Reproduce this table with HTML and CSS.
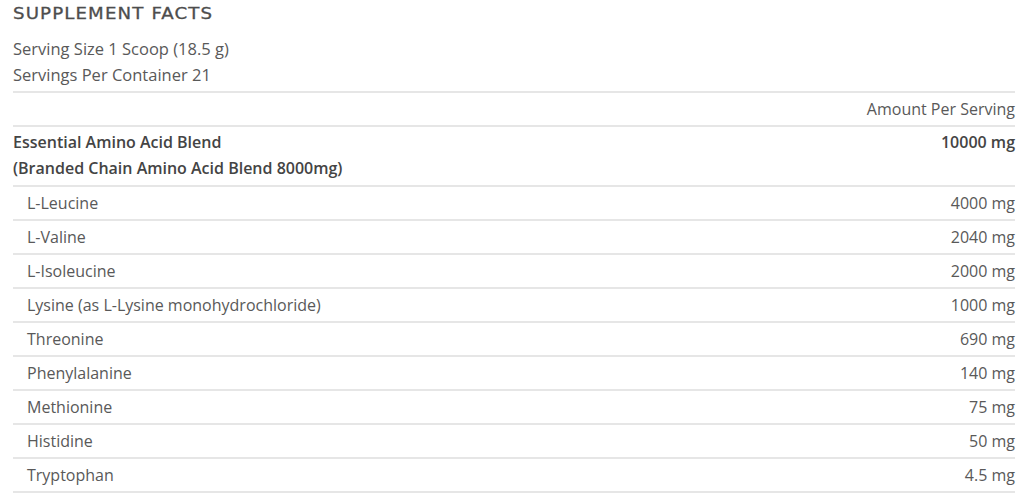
FILE: index.html
```html
<!DOCTYPE html>
<html>
<head>
	<meta charset="utf-8">
	<title>Supplement Facts</title>
	<link rel="stylesheet" href="styles.css">
</head>
<body>
<div class="facts">
	<h2 class="title">SUPPLEMENT FACTS</h2>
	<div class="serving">
		<p>Serving Size 1 Scoop (18.5 g)</p>
		<p>Servings Per Container 21</p>
	</div>
	<table class="tbl">
		<tr class="head">
			<td></td>
			<td class="amt">Amount Per Serving</td>
		</tr>
		<tr class="blend">
			<td>Essential Amino Acid Blend<br>(Branded Chain Amino Acid Blend 8000mg)</td>
			<td class="amt">10000 mg</td>
		</tr>
		<tr class="sub"><td>L-Leucine</td><td class="amt">4000 mg</td></tr>
		<tr class="sub"><td>L-Valine</td><td class="amt">2040 mg</td></tr>
		<tr class="sub"><td>L-Isoleucine</td><td class="amt">2000 mg</td></tr>
		<tr class="sub"><td>Lysine (as L-Lysine monohydrochloride)</td><td class="amt">1000 mg</td></tr>
		<tr class="sub"><td>Threonine</td><td class="amt">690 mg</td></tr>
		<tr class="sub"><td>Phenylalanine</td><td class="amt">140 mg</td></tr>
		<tr class="sub"><td>Methionine</td><td class="amt">75 mg</td></tr>
		<tr class="sub"><td>Histidine</td><td class="amt">50 mg</td></tr>
		<tr class="sub"><td>Tryptophan</td><td class="amt">4.5 mg</td></tr>
	</table>
</div>
</body>
</html>
```
FILE: styles.css
```css
body{
	margin: 0;
	background: #fff;
	font-family: "Open Sans", "Noto Sans", sans-serif;
	color: #595959;
}
.facts{
	padding: 0 9px 0 13px;
}
.title{
	display: inline-block;
	margin: 0;
	padding-top: 4px;
	height: 32px;
	font-family: "DejaVu Sans", sans-serif;
	font-weight: normal;
	font-size: 16px;
	letter-spacing: 1px;
	color: #4d4d4d;
	-webkit-text-stroke: 0.3px #4d4d4d;
	transform: scaleX(1.135);
	transform-origin: left;
}
.serving{
	padding-bottom: 3px;
}
.serving p{
	margin: 0;
	font-size: 16.5px;
	line-height: 26px;
}
.tbl{
	width: 100%;
	border-collapse: collapse;
	font-size: 16px;
	border-top: 2px solid #e6e6e6;
}
.tbl td{
	border-bottom: 2px solid #e6e6e6;
	padding: 0;
	height: 32px;
	vertical-align: middle;
}
.tbl .amt{
	text-align: right;
	white-space: nowrap;
}
.blend td{
	font-weight: 600;
	line-height: 26px;
	height: 56px;
	vertical-align: top;
	padding-top: 2px;
	color: #444;
}
.sub td:first-child{
	padding-left: 14px;
}
```
